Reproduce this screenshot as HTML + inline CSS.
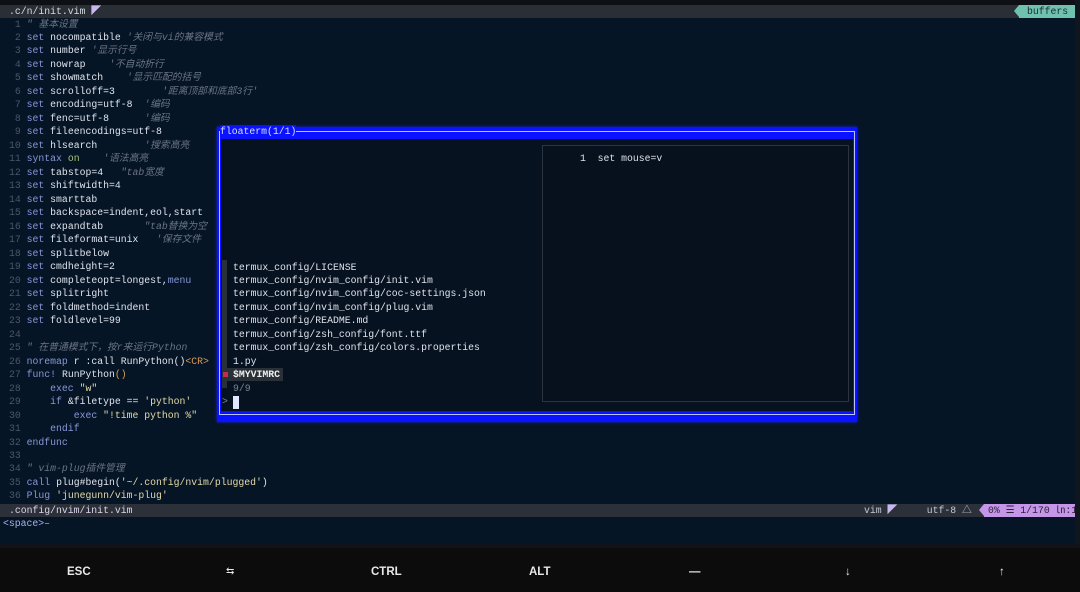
<!DOCTYPE html>
<html><head><meta charset="utf-8"><style>
*{margin:0;padding:0;box-sizing:border-box}
html,body{overflow:hidden}
body{width:1080px;height:592px;background:#061526;font-family:"Liberation Mono","Noto Sans CJK SC",monospace;font-size:9.8px;color:#dfe3ec;position:relative}
.a{position:absolute;white-space:pre;line-height:13.48px}
.n{color:#4b5668}
.k{color:#8797d6}
.c{color:#6a7484;font-style:italic}
.g{color:#a5c47a}
.s{color:#e2d9a8}
.o{color:#d99c52}
.key{position:absolute;top:564px;line-height:16px;font-family:"Liberation Sans",sans-serif;font-weight:bold;font-size:11.5px;color:#e8e8e8;white-space:nowrap}
</style></head><body>
<div class="a" style="left:0;top:0;width:1080px;height:5px;background:#0d1015"></div>
<div class="a" style="left:0;top:5px;width:1075px;height:13px;background:#2a2e35"></div>
<div class="a" style="left:9px;top:5px;line-height:13px;color:#d7dbe4">.c/n/init.vim <span style="color:#c9b8f0">◤</span></div>
<div class="a" style="left:1019px;top:5px;width:56px;height:13px;line-height:13px;background:#6fc2b0;color:#1d2b30;padding-left:8px">buffers</div>
<div class="a" style="left:1014px;top:5px;width:0;height:0;border-top:6.5px solid transparent;border-bottom:6.5px solid transparent;border-right:5px solid #6fc2b0"></div>
<div class="a" style="left:1075px;top:0;width:5px;height:548px;background:#10161d"></div>

<div class="a" style="left:9px;top:17.5px"><span class="n"> 1</span> <span class="c">" 基本设置</span>
<span class="n"> 2</span> <span class="k">set</span> nocompatible <span class="c">'关闭与vi的兼容模式</span>
<span class="n"> 3</span> <span class="k">set</span> number <span class="c">'显示行号</span>
<span class="n"> 4</span> <span class="k">set</span> nowrap    <span class="c">'不自动折行</span>
<span class="n"> 5</span> <span class="k">set</span> showmatch    <span class="c">'显示匹配的括号</span>
<span class="n"> 6</span> <span class="k">set</span> scrolloff=3        <span class="c">'距离顶部和底部3行'</span>
<span class="n"> 7</span> <span class="k">set</span> encoding=utf-8  <span class="c">'编码</span>
<span class="n"> 8</span> <span class="k">set</span> fenc=utf-8      <span class="c">'编码</span>
<span class="n"> 9</span> <span class="k">set</span> fileencodings=utf-8
<span class="n">10</span> <span class="k">set</span> hlsearch        <span class="c">'搜索高亮</span>
<span class="n">11</span> <span class="k">syntax</span> <span class="g">on</span>    <span class="c">'语法高亮</span>
<span class="n">12</span> <span class="k">set</span> tabstop=4   <span class="c">"tab宽度</span>
<span class="n">13</span> <span class="k">set</span> shiftwidth=4
<span class="n">14</span> <span class="k">set</span> smarttab
<span class="n">15</span> <span class="k">set</span> backspace=indent,eol,start
<span class="n">16</span> <span class="k">set</span> expandtab       <span class="c">"tab替换为空</span>
<span class="n">17</span> <span class="k">set</span> fileformat=unix   <span class="c">'保存文件</span>
<span class="n">18</span> <span class="k">set</span> splitbelow
<span class="n">19</span> <span class="k">set</span> cmdheight=2
<span class="n">20</span> <span class="k">set</span> completeopt=longest,<span class="k">menu</span>
<span class="n">21</span> <span class="k">set</span> splitright
<span class="n">22</span> <span class="k">set</span> foldmethod=indent
<span class="n">23</span> <span class="k">set</span> foldlevel=99
<span class="n">24</span>
<span class="n">25</span> <span class="c">" 在普通模式下，按r来运行Python</span>
<span class="n">26</span> <span class="k">noremap</span> r :call RunPython()<span class="o">&lt;CR&gt;</span>
<span class="n">27</span> <span class="k">func!</span> RunPython<span class="o">()</span>
<span class="n">28</span>     <span class="k">exec</span> <span class="s">"w"</span>
<span class="n">29</span>     <span class="k">if</span> &amp;filetype == <span class="s">'python'</span>
<span class="n">30</span>         <span class="k">exec</span> <span class="s">"!time python %"</span>
<span class="n">31</span>     <span class="k">endif</span>
<span class="n">32</span> <span class="k">endfunc</span>
<span class="n">33</span>
<span class="n">34</span> <span class="c">" vim-plug插件管理</span>
<span class="n">35</span> <span class="k">call</span> plug#begin(<span class="s">'~/.config/nvim/plugged'</span>)
<span class="n">36</span> <span class="k">Plug</span> <span class="s">'junegunn/vim-plug'</span></div>

<div class="a" style="left:0;top:504px;width:1075px;height:13px;background:#2c3038"></div>
<div class="a" style="left:9px;top:504px;line-height:13px;color:#dcd6ec">.config/nvim/init.vim</div>
<div class="a" style="left:864px;top:504px;line-height:13px;color:#c3c8d2">vim <span style="color:#c9b8f0">◤</span>     utf-8 △</div>
<div class="a" style="left:984px;top:504px;width:91px;height:13px;background:#c596e8;color:#2a2238;padding-left:4px;line-height:13px;overflow:hidden">0% ☰ 1/170 ㏑:1</div>
<div class="a" style="left:979px;top:504px;width:0;height:0;border-top:6.5px solid transparent;border-bottom:6.5px solid transparent;border-right:5px solid #c596e8"></div>
<div class="a" style="left:3px;top:517px;color:#a9b4f0">&lt;space&gt;–</div>

<div class="a" style="left:0;top:544px;width:1080px;height:5px;background:#111318"></div>
<div class="a" style="left:0;top:548px;width:1080px;height:44px;background:#0c0c0c"></div>
<div class="key" style="left:67px">ESC</div>
<div class="key" style="left:226px;font-weight:normal;font-size:10px">⇆</div>
<div class="key" style="left:371px">CTRL</div>
<div class="key" style="left:529px">ALT</div>
<div class="key" style="left:689px">—</div>
<div class="key" style="left:845px">↓</div>
<div class="key" style="left:999px">↑</div>

<!-- floaterm -->
<div class="a" style="left:217px;top:127px;width:640px;height:295px;background:#0a12ff;box-shadow:0 0 3px #1020ff"></div>
<div class="a" style="left:219px;top:131px;width:636px;height:284px;border:1px solid #b8c4ff"></div>
<div class="a" style="left:221px;top:139px;width:632px;height:272px;background:#06121f"></div>
<div class="a" style="left:220px;top:125px;background:#0a12ff;color:#d8e0ff;line-height:13px">floaterm(1/1)</div>
<div class="a" style="left:542px;top:145px;width:307px;height:257px;border:1px solid #2c3440;background:#06111d"></div>
<div class="a" style="left:580px;top:152px;color:#dde2ea">1  set mouse=v</div>
<div class="a" style="left:222px;top:260px;width:5px;height:128px;background:#2a3038"></div>
<div class="a" style="left:233px;top:260.5px;color:#dfe3ec">termux_config/LICENSE
termux_config/nvim_config/init.vim
termux_config/nvim_config/coc-settings.json
termux_config/nvim_config/plug.vim
termux_config/README.md
termux_config/zsh_config/font.ttf
termux_config/zsh_config/colors.properties
1.py</div>
<div class="a" style="left:222px;top:368px;width:61px;height:13px;background:#2a3038"></div>
<div class="a" style="left:223px;top:372px;width:5px;height:5px;background:#c0304a"></div>
<div class="a" style="left:233px;top:368px;line-height:13px;color:#f0f0f0;font-weight:bold">$MYVIMRC</div>
<div class="a" style="left:233px;top:381.5px;color:#7c8494">9/9</div>
<div class="a" style="left:222px;top:395px;color:#7c8494">&gt;</div>
<div class="a" style="left:233px;top:396px;width:6px;height:13px;background:#e0e6ff"></div>
</body></html>
